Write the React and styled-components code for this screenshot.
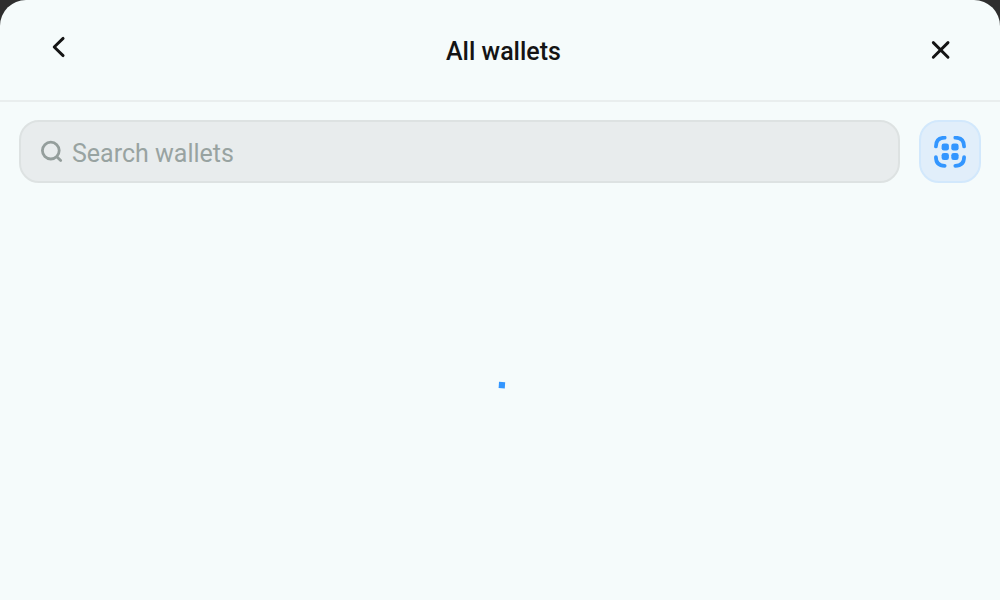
import React, { useState } from 'react';
import styled, { createGlobalStyle } from 'styled-components';

const GlobalStyle = createGlobalStyle`
  *, *::before, *::after { box-sizing: border-box; }
  body {
    margin: 0;
    background: #2e2e2e;
    font-family: Roboto, "Liberation Sans", sans-serif;
    color: #141414;
  }
  button, input { font: inherit; color: inherit; }
`;

const Sheet = styled.main`
  display: flex;
  flex-direction: column;
  min-height: 100vh;
  background: #f5fbfb;
  border-radius: 26px 26px 0 0;
`;

const Header = styled.header`
  display: flex;
  align-items: center;
  justify-content: space-between;
  height: 102px;
  padding: 0 42px 0 34px;
  border-bottom: 2px solid #e9eeee;
`;

const Title = styled.h1`
  margin: 0;
  padding: 4px 0 0 3px;
  font-size: 25px;
  line-height: 32px;
  font-weight: 500;
`;

const HeaderButton = styled.button`
  display: flex;
  align-items: center;
  justify-content: center;
  width: ${(p) => (p.$wide ? 48 : 36)}px;
  height: 48px;
  padding: 0 0 ${(p) => (p.$wide ? 6 : 0)}px;
  border: 0;
  background: none;
  cursor: pointer;
`;

const Toolbar = styled.div`
  display: flex;
  gap: 19px;
  padding: 18px 19px 0;
`;

const SearchField = styled.label`
  display: flex;
  flex: 1;
  align-items: center;
  gap: 8px;
  height: 63px;
  padding: 0 19px;
  border: 2px solid #dde2e2;
  border-radius: 20px;
  background: #e8eced;
  color: #949e9c;
`;

const SearchInput = styled.input`
  flex: 1;
  min-width: 0;
  height: 32px;
  padding: 3px 0 0;
  border: 0;
  outline: 0;
  background: none;
  color: #141414;
  font-size: 25px;
  &::placeholder { color: #98a3a1; opacity: 1; }
`;

const ScanButton = styled.button`
  display: flex;
  align-items: center;
  justify-content: center;
  width: 62px;
  height: 63px;
  padding: 0;
  border: 2px solid #d2e8fc;
  border-radius: 20px;
  background: #e1eefa;
  color: #3396ff;
  cursor: pointer;
`;

const Results = styled.section`
  display: flex;
  flex: 1;
  align-items: center;
  justify-content: center;
  padding: 0 0 14px 3px;
`;

const Icon = styled.svg`
  display: block;
  flex: none;
  fill: none;
  stroke: currentColor;
  stroke-linecap: round;
  stroke-linejoin: round;
`;

function BackIcon() {
  return (
    <Icon width="24" height="24" viewBox="0 0 24 24" strokeWidth="2.9" aria-hidden="true">
      <path d="M17.1 3.4 8.2 12l8.9 8.6" />
    </Icon>
  );
}

function CloseIcon() {
  return (
    <Icon width="24" height="24" viewBox="0 0 24 24" strokeWidth="2.9" aria-hidden="true">
      <path d="M5.3 4.6 20 19.3M20 4.6 5.3 19.3" />
    </Icon>
  );
}

function SearchIcon() {
  return (
    <Icon width="24" height="24" viewBox="0 0 24 24" strokeWidth="2.8" aria-hidden="true">
      <circle cx="10.8" cy="10.6" r="8.4" />
      <path d="m17 16.9 3.7 3.7" />
    </Icon>
  );
}

function ScanIcon() {
  return (
    <Icon width="32" height="32" viewBox="0 0 32 32" strokeWidth="3.7" aria-hidden="true">
      <path d="M1.9 10.4C1.9 4.4 4.6 1.7 10.7 1.7M21.3 1.7c6.1 0 8.8 2.7 8.8 8.7M30.1 21.1c0 6-2.7 8.7-8.8 8.7M10.7 29.8c-6.1 0-8.8-2.7-8.8-8.7" />
      <g fill="currentColor" stroke="none">
        <rect x="7.6" y="7.4" width="7.3" height="7.2" rx="2.4" />
        <rect x="17.3" y="7.4" width="7.3" height="7.2" rx="2.4" />
        <rect x="7.6" y="16.9" width="7.3" height="7.2" rx="2.4" />
        <rect x="17.3" y="16.9" width="7.3" height="7.2" rx="2.4" />
      </g>
    </Icon>
  );
}

function Spinner() {
  return (
    <svg width="8" height="8" viewBox="0 0 8 8" role="status" aria-label="Loading">
      <path d="M1 .8 7.2 1.2 6.8 7.4.6 7Z" fill="#3396ff" />
    </svg>
  );
}

export default function App() {
  const [query, setQuery] = useState('');
  return (
    <>
      <GlobalStyle />
      <Sheet>
        <Header>
          <HeaderButton type="button" $wide aria-label="Back"><BackIcon /></HeaderButton>
          <Title>All wallets</Title>
          <HeaderButton type="button" aria-label="Close"><CloseIcon /></HeaderButton>
        </Header>
        <Toolbar>
          <SearchField>
            <SearchIcon />
            <SearchInput
              type="text"
              aria-label="Search wallets"
              placeholder="Search wallets"
              value={query}
              onChange={(e) => setQuery(e.target.value)}
            />
          </SearchField>
          <ScanButton type="button" aria-label="Scan QR code"><ScanIcon /></ScanButton>
        </Toolbar>
        <Results><Spinner /></Results>
      </Sheet>
    </>
  );
}
